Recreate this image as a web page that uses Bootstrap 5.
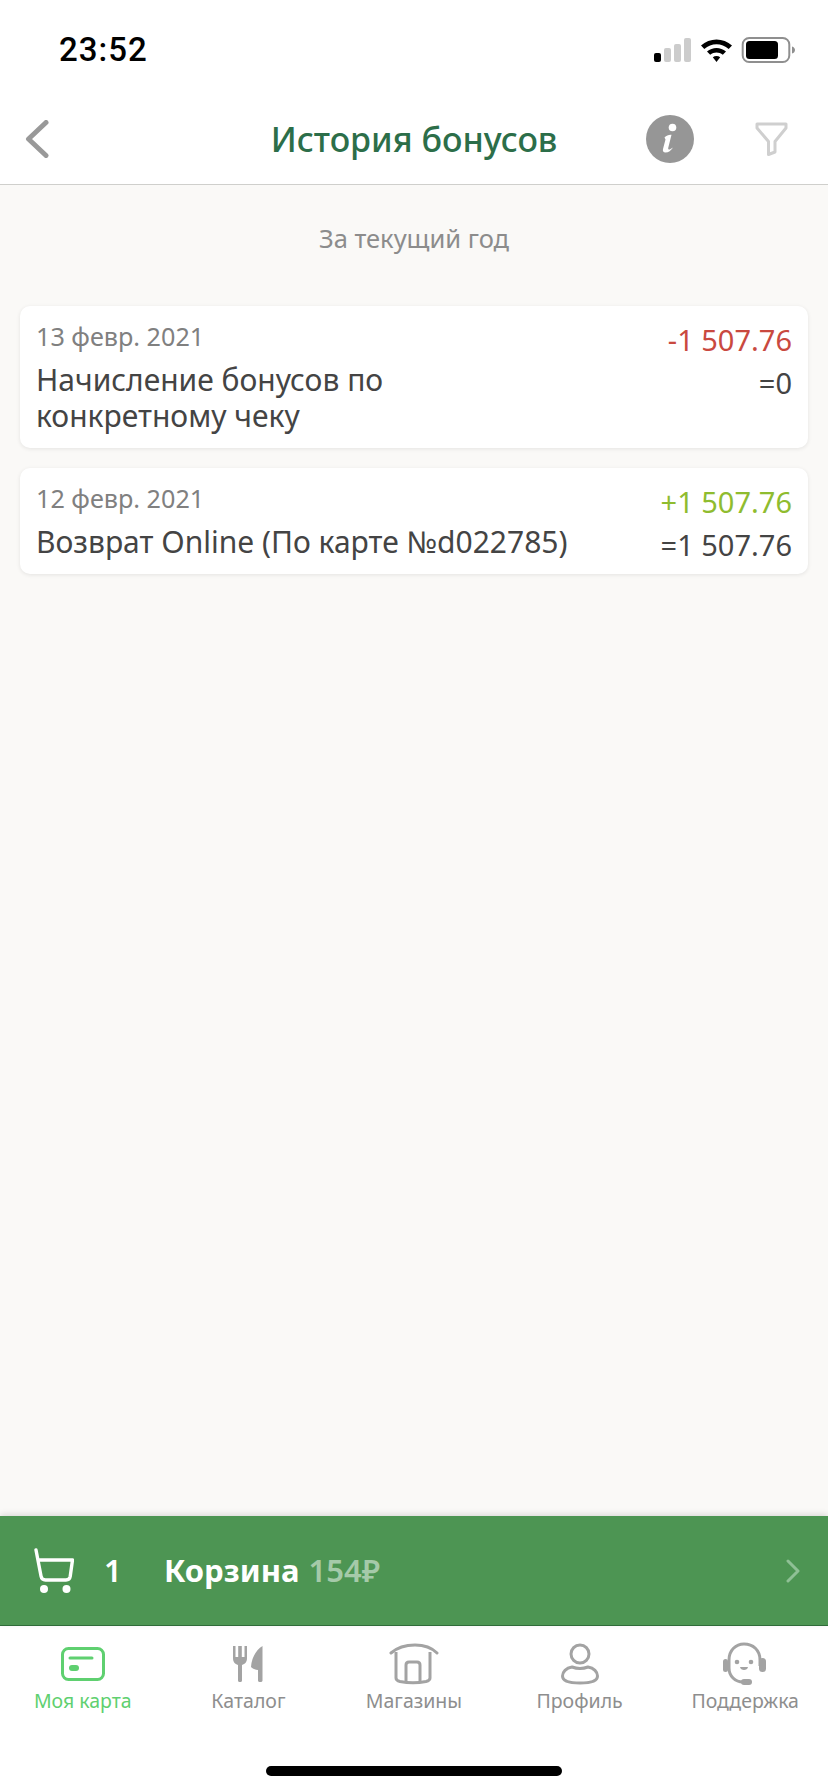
<!DOCTYPE html>
<html lang="ru">
<head>
    <meta charset="UTF-8">
    <meta name="viewport" content="width=device-width, initial-scale=1.0">
    <title>История бонусов</title>
    <link href="https://cdn.jsdelivr.net/npm/bootstrap@5.3.0/dist/css/bootstrap.min.css" rel="stylesheet">
    <style>
        html, body {
            height: 100%;
        }
        body {
            font-family: "Noto Sans", "Open Sans", sans-serif;
            background: #fff;
            color: #444;
        }
        .app-screen {
            height: 1792px;
        }
        .status-row {
            height: 84px;
            padding: 0 32px 0 59px;
        }
        .status-time {
            font-family: Roboto, sans-serif;
            font-weight: 500;
            font-size: 33px;
            line-height: 1;
            color: #000;
            letter-spacing: 1px;
            padding-top: 14px;
        }
        .status-icons {
            margin-top: 18px;
        }
        .top-bar {
            height: 101px;
            border-bottom: 1px solid #cfcfcc;
            padding: 10px 40px 0 25px;
        }
        .top-title {
            left: 0;
            right: 0;
            top: 10px;
            bottom: 0;
            font-size: 34px;
            font-weight: 500;
            color: #2c6e49;
        }
        .top-actions {
            gap: 61px;
        }
        .history-area {
            background: #faf9f7;
            padding: 0 20px;
        }
        .period-label {
            font-size: 25.5px;
            line-height: 32px;
            color: #8c8c8c;
            padding: 37px 0 52px;
        }
        .bonus-card {
            border: 0;
            border-radius: 10px;
            box-shadow: 0 1px 4px rgba(0, 0, 0, .09);
            padding: 15px 16px 9px 16px;
            margin-bottom: 20px;
        }
        .bonus-date {
            font-size: 25.2px;
            line-height: 30px;
            color: #808080;
        }
        .bonus-text {
            font-size: 30px;
            line-height: 36px;
            color: #444;
            max-width: 400px;
            margin-top: 11px;
            margin-bottom: 5px;
        }
        .bonus-sum {
            font-size: 29px;
            line-height: 38px;
            white-space: nowrap;
        }
        .sum-minus { color: #c9493f; }
        .sum-plus { color: #8fbc2f; }
        .sum-total { margin-top: 5px; color: #444; }
        .cart-bar {
            height: 110px;
            background: #4d9553;
            border-bottom: 1px solid #2f6b39;
            box-shadow: 0 -2px 6px rgba(0, 0, 0, .12);
            padding: 0 28px 0 34px;
            color: #fff;
            font-size: 31px;
            font-weight: 700;
        }
        .cart-count {
            width: 60px;
            margin-left: 30px;
            font-weight: 600;
        }
        .cart-sum {
            color: #a5caa9;
            margin-left: 9px;
            font-weight: 600;
        }
        .tab-row {
            height: 140px;
        }
        .tab-item {
            flex: 1 1 0;
            padding-top: 14px;
            font-size: 19.5px;
            line-height: 26px;
            color: #8e8e8e;
        }
        .tab-item.is-active {
            color: #5fd070;
        }
        .tab-icon {
            height: 48px;
        }
        .home-line {
            width: 296px;
            height: 10px;
            background: #000;
            border-radius: 5px;
            margin-bottom: 16px;
        }
    </style>
</head>
<body>
    <div class="app-screen d-flex flex-column">
        <!-- статус-бар -->
        <div class="status-row d-flex justify-content-between align-items-center flex-shrink-0">
            <div class="status-time">23:52</div>
            <svg width="142" height="28" viewBox="0 0 142 28" class="status-icons">
                <rect x="0" y="16" width="7" height="9" rx="2" fill="#000"/>
                <rect x="10" y="11" width="7" height="14" rx="2" fill="#ccc"/>
                <rect x="20" y="7" width="7" height="18" rx="2" fill="#ccc"/>
                <rect x="30" y="1" width="7" height="24" rx="2" fill="#ccc"/>
                <path d="M47 8.5C55.5 .5 69.5 .5 78 8.5L74.700 12C67.700 5.700 57.300 5.700 50.300 12Z" fill="#000"/>
                <path d="M53 14.500C58.500 9.700 66.500 9.700 72 14.500L68.800 17.800C65 14.800 60 14.800 56.200 17.800Z" fill="#000"/>
                <path d="M62.500 25L58.800 20.300C61 18.700 64 18.700 66.200 20.300Z" fill="#000"/>
                <rect x="88.700" y="1" width="46.600" height="24" rx="6.500" fill="none" stroke="#8f8f8f" stroke-width="2"/>
                <rect x="92" y="4" width="32" height="18" rx="3.500" fill="#000"/>
                <path d="M138 9.500C140 10 141 11.500 141 13C141 14.500 140 16 138 16.500Z" fill="#8f8f8f"/>
            </svg>
        </div>

        <!-- шапка -->
        <div class="top-bar position-relative d-flex justify-content-between align-items-center flex-shrink-0">
            <svg width="24" height="38" viewBox="0 0 24 38">
                <path d="M21 2.500L3.500 19L21 35.500" fill="none" stroke="#999" stroke-width="5" stroke-linecap="round" stroke-linejoin="round"/>
            </svg>
            <div class="top-title position-absolute d-flex justify-content-center align-items-center">История бонусов</div>
            <div class="top-actions d-flex align-items-center position-relative">
                <svg width="48" height="48" viewBox="0 0 48 48">
                    <circle cx="24" cy="24" r="24" fill="#969696"/>
                    <circle cx="26.500" cy="12.500" r="3.800" fill="#fff"/>
                    <path d="M18.500 22.500C20.500 20.500 23 19.500 25.500 19.800L22.200 33C22 34.500 23 35 24.500 34L27 32.500C25 35.500 22.500 37.500 19.500 37.500C17.300 37.500 16.500 36 17 34L19.500 24.500Z" fill="#fff"/>
                </svg>
                <svg width="33" height="34" viewBox="0 0 33 34">
                    <path d="M2 2H31V6L20 19.500V30L13.500 32.500V19.500L2 6Z" fill="none" stroke="#cfcfcf" stroke-width="3" stroke-linejoin="round"/>
                </svg>
            </div>
        </div>

        <!-- список -->
        <div class="history-area flex-grow-1">
            <div class="period-label text-center">За текущий год</div>

            <div class="card bonus-card">
                <div class="d-flex justify-content-between">
                    <div>
                        <div class="bonus-date">13 февр. 2021</div>
                        <div class="bonus-text">Начисление бонусов по конкретному чеку</div>
                    </div>
                    <div class="text-end">
                        <div class="bonus-sum sum-minus">-1 507.76</div>
                        <div class="bonus-sum sum-total">=0</div>
                    </div>
                </div>
            </div>

            <div class="card bonus-card">
                <div class="d-flex justify-content-between">
                    <div>
                        <div class="bonus-date">12 февр. 2021</div>
                        <div class="bonus-text text-nowrap">Возврат Online (По карте №d022785)</div>
                    </div>
                    <div class="text-end">
                        <div class="bonus-sum sum-plus">+1 507.76</div>
                        <div class="bonus-sum sum-total">=1 507.76</div>
                    </div>
                </div>
            </div>
        </div>

        <!-- корзина -->
        <div class="cart-bar d-flex align-items-center flex-shrink-0">
            <svg width="40" height="46" viewBox="0 0 40 46">
                <path d="M2 2L7 28C7.500 31 9 32 11.500 32H32C34.500 32 35.800 30.800 36.200 28.500L38.500 12H4" fill="none" stroke="#fff" stroke-width="3.400" stroke-linecap="round" stroke-linejoin="round"/>
                <circle cx="10" cy="41" r="4" fill="#fff"/>
                <circle cx="32.500" cy="41" r="4" fill="#fff"/>
            </svg>
            <span class="cart-count">1</span>
            <span>Корзина</span>
            <span class="cart-sum">154₽</span>
            <svg width="14" height="24" viewBox="0 0 14 24" class="ms-auto">
                <path d="M2 2L12 12L2 22" fill="none" stroke="#8fc095" stroke-width="3" stroke-linecap="round" stroke-linejoin="round"/>
            </svg>
        </div>

        <!-- таббар -->
        <div class="tab-row d-flex flex-shrink-0">
            <div class="tab-item is-active d-flex flex-column align-items-center">
                <div class="tab-icon d-flex align-items-center">
                    <svg width="44" height="34" viewBox="0 0 44 34">
                        <rect x="1.500" y="1.500" width="41" height="31" rx="6" fill="none" stroke="#5fd070" stroke-width="3"/>
                        <path d="M9 11H31" stroke="#5fd070" stroke-width="3" stroke-linecap="round"/>
                        <rect x="8" y="18" width="10" height="6" rx="3" fill="#5fd070"/>
                    </svg>
                </div>
                <span>Моя карта</span>
            </div>
            <div class="tab-item d-flex flex-column align-items-center">
                <div class="tab-icon d-flex align-items-center">
                    <svg width="32" height="38" viewBox="0 0 32 38">
                        <path d="M1 1V13C1 17 3 19 6 20V35.500C6 37.500 10 37.500 10 35.500V20C13 19 15 17 15 13V1H12.500V12H9.800V1H6.200V12H3.500V1Z" fill="#a3a3a3"/>
                        <path d="M30.500 1C24 5 19.500 13 19 22C21 24 24 25 26 25V35.500C26 37.500 30.500 37.500 30.500 35.500Z" fill="#a3a3a3"/>
                    </svg>
                </div>
                <span>Каталог</span>
            </div>
            <div class="tab-item d-flex flex-column align-items-center">
                <div class="tab-icon d-flex align-items-center">
                    <svg width="50" height="42" viewBox="0 0 50 42">
                        <path d="M2 10C10 3 18 2 26 2C34 2 42 4 48 10" fill="none" stroke="#a3a3a3" stroke-width="3" stroke-linecap="round"/>
                        <path d="M7 9V35C7 37 9 38 11 38.500C19 40 29 40 37 38.500C39 38 41 37 41 35V9" fill="none" stroke="#a3a3a3" stroke-width="3"/>
                        <path d="M17 39V22C17 20 18 19 20 19H28C30 19 31 20 31 22V39" fill="none" stroke="#a3a3a3" stroke-width="3"/>
                    </svg>
                </div>
                <span>Магазины</span>
            </div>
            <div class="tab-item d-flex flex-column align-items-center">
                <div class="tab-icon d-flex align-items-center">
                    <svg width="38" height="42" viewBox="0 0 38 42">
                        <circle cx="19" cy="11" r="9" fill="none" stroke="#a3a3a3" stroke-width="3"/>
                        <path d="M11 24C5 25 1.500 29 1.500 33C1.500 38 8 40 19 40C30 40 36.500 38 36.500 33C36.500 29 33 25 27 24C22 26 16 26 11 24Z" fill="none" stroke="#a3a3a3" stroke-width="3" stroke-linejoin="round"/>
                    </svg>
                </div>
                <span>Профиль</span>
            </div>
            <div class="tab-item d-flex flex-column align-items-center">
                <div class="tab-icon d-flex align-items-center">
                    <svg width="44" height="44" viewBox="0 0 44 44">
                        <path d="M6 18C6 8 13 2 21 2C30 2 37 8 37 18V24" fill="none" stroke="#a3a3a3" stroke-width="3"/>
                        <path d="M6 18V26C6 34 12 40 20 40" fill="none" stroke="#a3a3a3" stroke-width="3"/>
                        <rect x="0" y="17" width="5" height="13" rx="2.500" fill="#a3a3a3"/>
                        <rect x="36" y="16" width="7" height="14" rx="3.500" fill="#a3a3a3"/>
                        <rect x="18" y="37" width="11" height="6" rx="3" fill="#a3a3a3"/>
                        <circle cx="14" cy="20" r="2.300" fill="#a3a3a3"/>
                        <circle cx="28" cy="20" r="2.300" fill="#a3a3a3"/>
                        <path d="M17 25H25C24.500 29 17.500 29 17 25Z" fill="#a3a3a3"/>
                    </svg>
                </div>
                <span>Поддержка</span>
            </div>
        </div>
        <div class="d-flex justify-content-center flex-shrink-0">
            <div class="home-line"></div>
        </div>
    </div>

    <script src="https://cdn.jsdelivr.net/npm/bootstrap@5.3.0/dist/js/bootstrap.bundle.min.js"></script>
</body>
</html>
